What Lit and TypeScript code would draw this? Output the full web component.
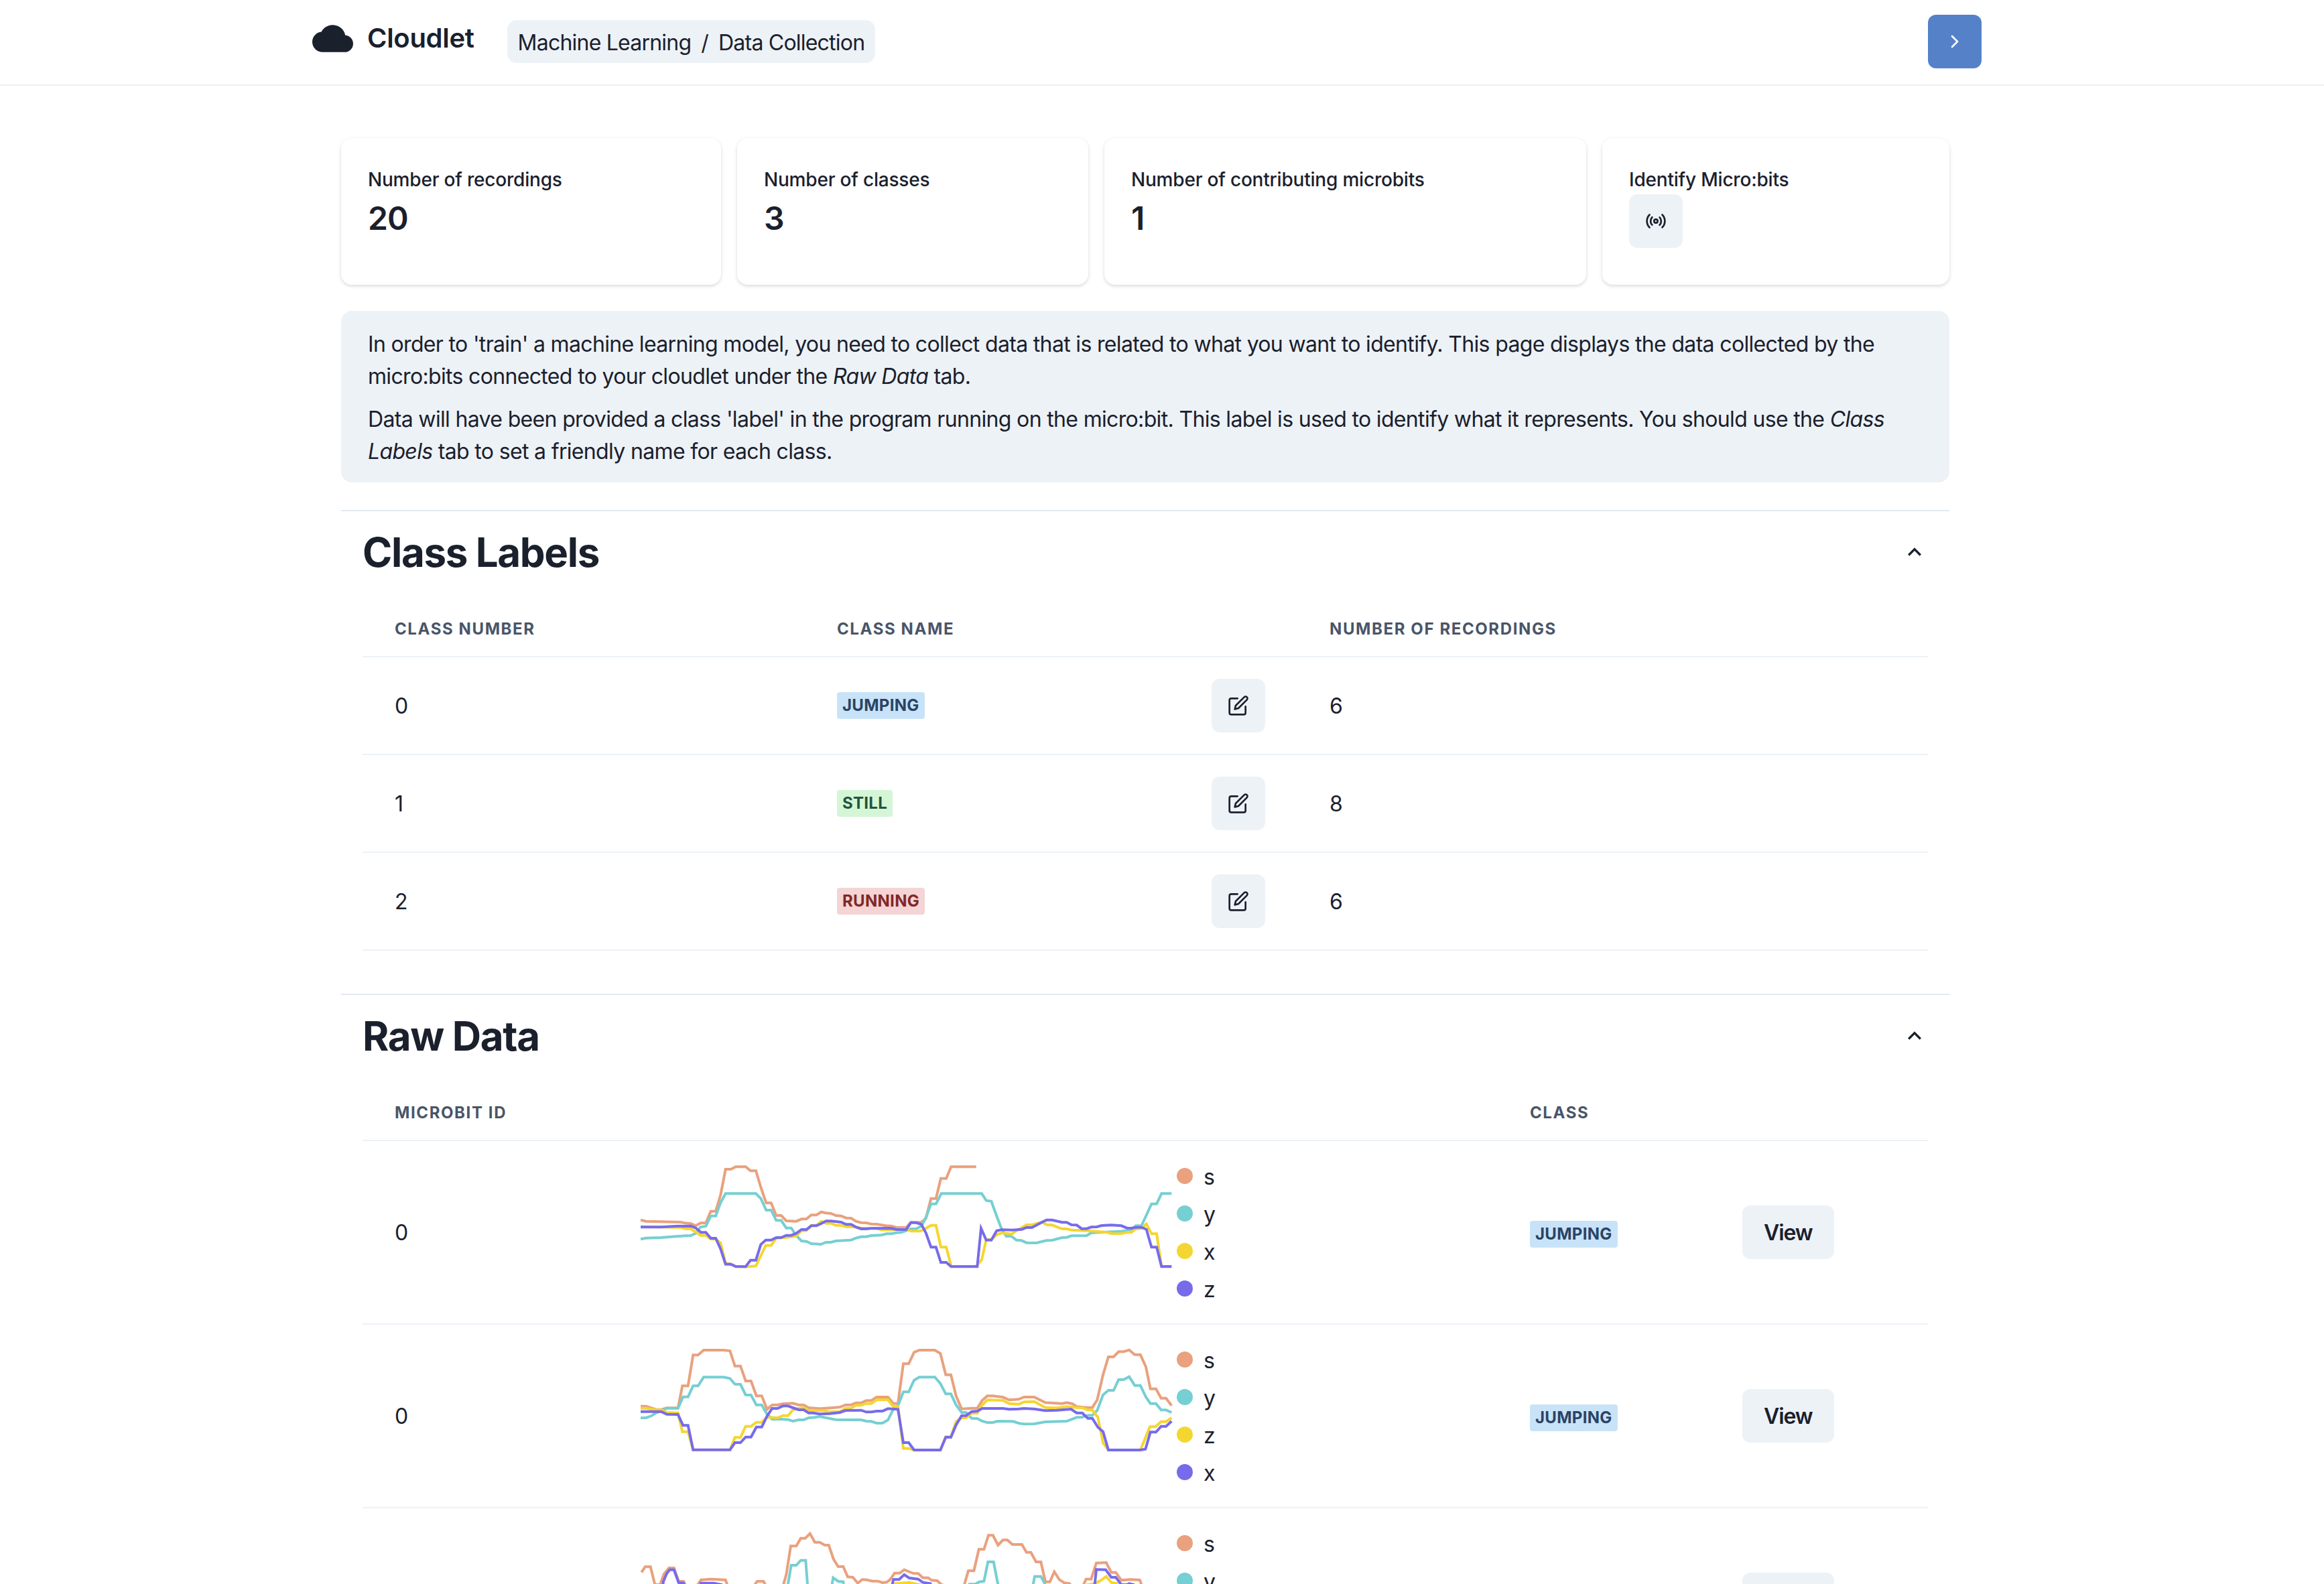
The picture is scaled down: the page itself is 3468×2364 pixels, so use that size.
import { LitElement, html, svg, css } from 'lit';
import { customElement } from 'lit/decorators.js';

type BadgeKind = 'jumping' | 'still' | 'running';

interface Recording {
  legend: string[];
  offset: number;
  lines: string[];
}

const LINE_COLORS = ['#e9a17e', '#76cfd2', '#f4d630', '#776beb'];

const CLASSES: { id: number; kind: BadgeKind; count: number }[] = [
  { id: 0, kind: 'jumping', count: 6 },
  { id: 1, kind: 'still', count: 8 },
  { id: 2, kind: 'running', count: 6 },
];

// traced from the recordings, 3 units per pixel
const RECORDINGS: Recording[] = [
  {
    legend: ['s', 'y', 'x', 'z'],
    offset: 0,
    lines: [
      '48,362 72,368 140,370 228,372 245,376 272,378 295,388 316,376 340,375 362,323 384,323 406,250 428,135 452,135 474,124 518,124 540,142 564,142 586,215 610,286 632,286 655,342 677,342 700,366 745,368 768,358 790,358 812,340 835,340 857,326 875,331 900,333 922,342 945,344 968,353 990,354 1012,368 1035,374 1058,375 1080,380 1105,381 1146,388 1170,389 1192,395 1237,396 1258,372 1280,373 1305,372 1325,355 1348,266 1370,266 1392,176 1416,176 1438,124 1550,124',
      '48,448 72,443 140,441 205,436 250,433 272,432 295,422 316,394 340,390 362,344 384,344 406,285 428,244 564,244 586,266 610,318 632,318 655,364 677,364 700,398 722,398 745,432 768,456 790,458 812,468 855,471 878,462 900,462 922,456 990,452 1012,443 1035,437 1058,437 1080,432 1125,430 1150,424 1170,424 1192,419 1215,418 1258,402 1280,402 1305,390 1325,352 1348,290 1370,290 1394,244 1575,244 1595,275 1618,278 1642,345 1665,405 1685,435 1708,435 1730,452 1752,454 1775,464 1820,465 1865,454 1890,453 1935,441 1955,440 1977,433 2045,432 2065,420 2110,417 2200,413 2245,406 2265,388 2290,388 2310,345 2335,290 2358,290 2380,244 2425,244',
      '48,392 140,394 228,396 250,402 272,402 295,416 316,431 340,431 362,448 384,448 406,465 428,556 452,560 474,570 518,572 564,568 586,522 608,476 632,476 655,444 700,440 745,434 768,410 790,410 812,386 835,386 857,368 878,377 900,377 922,386 945,386 968,392 1012,394 1035,398 1105,400 1125,406 1170,407 1192,404 1237,402 1258,412 1300,412 1325,400 1348,386 1370,386 1392,484 1416,484 1438,568 1440,570 1550,570 1575,540 1595,450 1618,450 1642,428 1665,420 1710,425 1730,410 1775,384 1800,384 1845,372 1865,383 1890,385 1935,402 1955,402 1977,407 2045,410 2090,413 2135,418 2158,424 2200,423 2225,418 2245,418 2265,402 2290,400 2312,380 2335,424 2358,424 2380,570 2425,570',
      '48,394 140,394 205,390 272,389 295,398 318,418 340,418 362,444 384,444 406,492 428,560 452,560 474,571 518,571 540,542 564,542 586,472 608,452 632,452 655,441 677,441 700,431 722,431 745,422 768,405 790,405 812,388 835,388 857,378 878,367 900,367 945,372 968,382 990,382 1012,394 1035,402 1058,402 1080,400 1170,399 1192,405 1237,405 1258,374 1280,374 1305,382 1325,420 1348,484 1370,484 1392,552 1416,552 1438,571 1555,571 1572,400 1595,452 1618,452 1642,410 1665,406 1710,407 1755,404 1775,396 1800,396 1845,372 1865,362 1890,362 1935,373 1955,373 1977,384 2000,385 2022,401 2045,401 2065,394 2090,393 2112,387 2155,385 2200,388 2225,398 2245,399 2265,395 2290,395 2312,404 2335,484 2358,484 2380,571 2425,571',
    ],
  },
  {
    legend: ['s', 'y', 'z', 'x'],
    offset: 18,
    lines: [
      '48,356 72,356 118,371 140,371 165,364 215,364 235,265 260,265 283,127 305,127 330,105 420,105 448,108 470,176 495,176 518,243 542,243 566,310 590,310 614,370 637,350 660,350 685,345 730,343 755,350 778,350 800,363 850,367 895,364 940,360 965,350 990,350 1012,341 1035,341 1058,331 1080,331 1105,315 1155,315 1180,344 1200,344 1224,166 1248,166 1272,115 1295,105 1365,105 1390,120 1414,215 1437,215 1460,310 1485,368 1530,365 1555,365 1577,330 1600,310 1625,310 1670,316 1698,328 1740,325 1765,315 1810,315 1860,340 1935,344 1955,340 1980,345 2000,358 2045,362 2070,362 2092,328 2118,215 2142,135 2165,135 2188,112 2210,112 2235,104 2260,125 2285,125 2310,180 2330,278 2355,278 2378,320 2400,320 2425,353',
      '48,408 72,408 95,400 118,385 140,378 165,365 215,365 238,314 260,314 283,265 305,265 330,226 420,226 448,232 470,257 495,258 518,305 542,306 566,350 590,350 614,392 637,414 680,414 708,416 730,423 755,417 778,417 800,408 830,406 850,402 895,411 920,416 1035,417 1058,423 1080,424 1105,432 1130,432 1155,418 1180,368 1200,355 1224,292 1248,292 1272,240 1295,226 1365,226 1390,255 1414,301 1437,301 1460,350 1485,384 1505,384 1530,410 1555,411 1577,423 1600,429 1625,429 1645,423 1715,424 1740,432 1765,436 1810,435 1860,426 1955,423 2000,406 2025,405 2050,397 2070,397 2092,375 2118,305 2142,285 2165,285 2188,237 2210,237 2235,224 2260,263 2285,263 2310,315 2330,344 2355,344 2378,373 2400,373 2425,384',
      '48,365 72,365 118,373 140,373 165,384 215,386 235,470 260,470 283,552 448,552 470,496 495,496 518,446 542,446 566,428 590,428 614,405 660,408 685,398 708,398 730,372 755,366 778,362 800,375 870,376 895,382 940,380 965,365 990,365 1012,352 1035,352 1058,344 1080,344 1105,327 1155,327 1180,358 1200,358 1224,545 1248,545 1272,553 1390,553 1414,493 1437,493 1460,425 1485,408 1505,408 1530,387 1555,387 1577,350 1600,328 1670,330 1698,344 1740,347 1765,337 1810,335 1860,362 1910,364 1955,358 2000,362 2025,363 2050,373 2070,373 2095,405 2118,520 2142,553 2285,553 2328,448 2353,448 2378,425 2400,425 2425,408',
      '48,380 140,380 165,392 215,393 238,442 260,442 283,551 448,551 470,519 495,519 518,494 542,494 566,449 590,449 614,400 637,366 660,366 685,355 708,355 730,363 755,372 778,372 800,386 820,386 850,391 895,389 940,384 965,375 1035,374 1058,382 1080,382 1105,378 1130,378 1155,367 1200,370 1224,519 1248,519 1272,552 1390,552 1414,495 1437,495 1460,440 1485,398 1505,398 1530,380 1555,378 1577,366 1670,366 1698,370 1740,368 1765,366 1810,368 1860,376 1910,374 1975,369 2000,386 2025,386 2050,410 2070,410 2095,450 2118,470 2142,552 2285,552 2308,548 2330,472 2355,472 2378,446 2400,446 2425,423',
    ],
  },
  {
    legend: ['s', 'y', 'z', 'x'],
    offset: 6,
    lines: [
      '52,290 68,265 92,265 112,345 135,345 152,298 175,270 197,270 218,330 240,330 262,370 300,350 318,324 360,320 395,322 428,324 445,370 540,370 570,330 598,330 620,370 680,370 700,300 720,172 745,172 765,137 785,137 806,116 828,155 850,155 872,168 890,168 912,232 932,264 955,264 975,310 998,312 1020,338 1040,322 1060,323 1085,329 1110,329 1130,336 1150,334 1165,322 1185,293 1208,293 1228,278 1270,295 1290,295 1312,314 1335,314 1350,325 1375,327 1395,345 1490,370 1515,283 1540,283 1562,187 1585,187 1605,124 1625,124 1648,168 1670,145 1690,145 1712,165 1755,165 1775,200 1795,200 1818,243 1840,243 1860,332 1880,332 1900,287 1922,322 1945,337 1968,340 1990,370 2020,370 2042,320 2065,320 2088,248 2132,246 2155,290 2175,290 2200,325 2240,322 2282,324 2300,370 2425,370',
      '690,400 708,340 722,258 745,258 765,236 787,236 795,345 800,400 895,400 910,314 932,330 955,332 962,400 1500,400 1520,343 1545,343 1565,332 1585,330 1603,243 1628,243 1648,345 1655,400 1795,400 1812,308 1840,308 1860,345 1870,400 2425,400',
      '1170,400 1185,340 1250,335 1300,345 1320,400 2040,400 2050,345 2070,342 2085,338 2110,325 2132,308 2155,335 2180,340 2195,400 2425,400',
      '140,400 150,330 165,295 178,278 197,278 218,336 240,338 255,400 300,400 318,338 375,338 410,345 430,400 1160,400 1180,322 1205,322 1228,300 1250,315 1290,320 1312,335 1345,340 1360,400 2075,400 2088,277 2130,278 2155,312 2175,312 2200,345 2225,345 2235,340 2255,345 2270,400 2425,400',
    ],
  },
];

const chartPoints = (line: string, offset: number) =>
  line
    .split(' ')
    .map((p) => {
      const [x, y] = p.split(',').map(Number);
      return `${(x / 3 - 16).toFixed(1)},${((y + offset) / 3 - 35).toFixed(1)}`;
    })
    .join(' ');

const editIcon = html`<svg class="icon" viewBox="0 0 24 24">
  <path d="M11 4H4a2 2 0 0 0-2 2v14a2 2 0 0 0 2 2h14a2 2 0 0 0 2-2v-7"></path>
  <path d="M18.5 2.5a2.121 2.121 0 0 1 3 3L12 15l-4 1 1-4 9.5-9.5z"></path>
</svg>`;

const radioIcon = html`<svg class="icon" viewBox="0 0 24 24">
  <path d="M4.9 19.1C1 15.2 1 8.8 4.9 4.9"></path>
  <path d="M7.8 16.2c-2.3-2.3-2.3-6.1 0-8.5"></path>
  <circle cx="12" cy="12" r="2"></circle>
  <path d="M16.2 7.8c2.3 2.3 2.3 6.1 0 8.5"></path>
  <path d="M19.1 4.9C23 8.8 23 15.1 19.1 19"></path>
</svg>`;

const collapseIcon = html`<svg class="collapse" viewBox="0 0 24 24">
  <path d="M16.59 8.59L12 13.17 7.41 8.59 6 10l6 6 6-6z"></path>
</svg>`;

@customElement('app-root')
export class AppRoot extends LitElement {
  static styles = css`
    :host {
      display: block;
      height: 2364px;
      overflow: hidden;
      background: #fff;
      color: #1a202c;
      font-family: Inter, 'Noto Sans', sans-serif;
      font-size: 32px;
      line-height: 48px;
      letter-spacing: -0.66px;
    }

    .icon {
      width: 32px;
      height: 32px;
      fill: none;
      stroke: currentColor;
      stroke-width: 2;
      stroke-linecap: round;
      stroke-linejoin: round;
    }

    /* Top bar */
    .topbar {
      display: flex;
      align-items: center;
      box-sizing: border-box;
      width: 2957px;
      height: 126px;
      padding: 0 0 2px 466px;
    }

    .topbar-line {
      border-bottom: 2px solid #edf2f7;
    }

    .logo {
      display: flex;
      align-items: center;
      gap: 21px;
      margin: 0 49px 10px 0;
      font-size: 40px;
      line-height: 60px;
      font-weight: 600;
      letter-spacing: -0.3px;
    }

    .logo svg {
      width: 61px;
      height: 41px;
      fill: #1a202c;
    }

    .crumbs {
      display: flex;
      align-items: center;
      box-sizing: border-box;
      height: 64px;
      padding: 4px 16px 0;
      border-radius: 14px;
      background: #edf2f7;
      letter-spacing: -0.78px;
    }

    .crumbs span {
      margin: 0 15px;
    }

    .next {
      display: flex;
      align-items: center;
      justify-content: center;
      width: 80px;
      height: 80px;
      margin-left: auto;
      padding: 0;
      border: none;
      border-radius: 12px;
      background: #5581c9;
      color: #fff;
    }

    /* Page body */
    .main {
      box-sizing: border-box;
      width: 2400px;
      margin-left: 509px;
      padding-top: 78px;
    }

    .stats {
      display: grid;
      grid-template-columns: 567fr 524fr 719fr 518fr;
      gap: 24px;
      height: 219px;
    }

    .stat {
      box-sizing: border-box;
      padding: 42px 40px;
      border-radius: 16px;
      background: #fff;
      box-shadow: 0 2px 6px rgba(0, 0, 0, 0.1), 0 2px 4px rgba(0, 0, 0, 0.06);
    }

    .stat-label {
      font-size: 28px;
      line-height: 40px;
      font-weight: 500;
      letter-spacing: -0.2px;
    }

    .stat-value {
      padding-top: 2px;
      font-size: 48px;
      line-height: 72px;
      font-weight: 600;
      letter-spacing: -1px;
    }

    .square {
      display: flex;
      align-items: center;
      justify-content: center;
      width: 80px;
      height: 80px;
      padding: 0;
      border: none;
      border-radius: 12px;
      background: #edf2f7;
      color: #1a202c;
    }

    .stat .square {
      margin-top: 2px;
    }

    .info {
      margin: 39px 0 41px;
      padding: 26px 40px 22px;
      border-radius: 16px;
      background: #edf2f7;
    }

    .info p {
      margin: 0;
    }

    .info p + p {
      margin-top: 16px;
    }

    /* Accordion sections */
    .section {
      padding-bottom: 64px;
      border-top: 2px solid #e2e8f0;
    }

    .section-head {
      display: flex;
      align-items: center;
      justify-content: space-between;
      height: 136px;
      padding: 0 32px 14px;
      box-sizing: border-box;
    }

    .section-head h2 {
      margin: 0;
      font-size: 60px;
      line-height: 90px;
      font-weight: 700;
      letter-spacing: -1.35px;
    }

    .collapse {
      width: 40px;
      height: 40px;
      fill: #1a202c;
      transform: rotate(180deg);
    }

    table {
      width: 2336px;
      margin-left: 32px;
      border-collapse: separate;
      border-spacing: 0;
      table-layout: fixed;
    }

    th {
      padding: 24px 48px;
      border-bottom: 2px solid #edf2f7;
      color: #4a5568;
      font-size: 24px;
      line-height: 32px;
      font-weight: 700;
      letter-spacing: 1.6px;
      text-align: left;
      text-transform: uppercase;
      white-space: nowrap;
    }

    td {
      padding: 32px 48px;
      border-bottom: 2px solid #edf2f7;
      line-height: 40px;
      vertical-align: middle;
    }

    .cell-text {
      display: inline-block;
      transform: translateY(1px);
    }

    .name-cell {
      display: flex;
      align-items: center;
      justify-content: space-between;
    }

    .badge {
      display: block;
      width: fit-content;
      padding: 0 8px;
      border-radius: 4px;
      font-size: 24px;
      line-height: 40px;
      font-weight: 700;
      letter-spacing: 0.3px;
      text-transform: uppercase;
    }

    .jumping {
      background: #c8e3f8;
      color: #2a4365;
    }

    .still {
      background: #d4f6d6;
      color: #22543d;
    }

    .running {
      background: #f4d4d4;
      color: #822727;
    }

    .raw .badge {
      margin-top: 6px;
    }

    /* Recording rows */
    .recording {
      display: flex;
      height: 208px;
    }

    .recording svg {
      flex: none;
      width: 800px;
      height: 208px;
      overflow: visible;
    }

    .recording polyline {
      fill: none;
      stroke-width: 4;
    }

    .legend {
      display: flex;
      flex-direction: column;
      gap: 16px;
    }

    .legend div {
      display: flex;
      align-items: center;
      gap: 16px;
      line-height: 40px;
    }

    .legend-name {
      transform: translateY(2px);
    }

    .dot {
      width: 24px;
      height: 24px;
      border-radius: 50%;
    }

    .view {
      height: 80px;
      padding: 2px 32px 0;
      border: none;
      border-radius: 12px;
      background: #edf2f7;
      color: #1a202c;
      font: 600 32px/40px Inter, sans-serif;
      letter-spacing: -1.1px;
    }
  `;

  private renderRecording(rec: Recording) {
    return html`<tr>
      <td><span class="cell-text">0</span></td>
      <td>
        <div class="recording">
          <svg viewBox="0 0 800 208">
            ${rec.lines.map(
              (line, i) =>
                svg`<polyline points=${chartPoints(line, rec.offset)} stroke=${LINE_COLORS[i]}></polyline>`
            )}
          </svg>
          <div class="legend">
            ${rec.legend.map(
              (name, i) =>
                html`<div>
                  <span class="dot" style="background:${LINE_COLORS[i]}"></span>
                  <span class="legend-name">${name}</span>
                </div>`
            )}
          </div>
        </div>
      </td>
      <td><span class="badge jumping">jumping</span></td>
      <td><button class="view">View</button></td>
    </tr>`;
  }

  render() {
    return html`
      <div class="topbar-line">
        <header class="topbar">
          <div class="logo">
            <svg viewBox="0 4 24 16">
              <path
                d="M19.35 10.04C18.67 6.59 15.64 4 12 4 9.11 4 6.6 5.64 5.35 8.04 2.34 8.36 0 10.91 0 14c0 3.31 2.69 6 6 6h13c2.76 0 5-2.24 5-5 0-2.64-2.05-4.78-4.65-4.96z"
              ></path>
            </svg>
            Cloudlet
          </div>
          <nav class="crumbs">Machine Learning<span>/</span>Data Collection</nav>
          <button class="next">
            <svg class="icon" viewBox="0 0 24 24"><path d="m9 18 6-6-6-6"></path></svg>
          </button>
        </header>
      </div>

      <main class="main">
        <div class="stats">
          <div class="stat">
            <div class="stat-label">Number of recordings</div>
            <div class="stat-value">20</div>
          </div>
          <div class="stat">
            <div class="stat-label">Number of classes</div>
            <div class="stat-value">3</div>
          </div>
          <div class="stat">
            <div class="stat-label">Number of contributing microbits</div>
            <div class="stat-value">1</div>
          </div>
          <div class="stat">
            <div class="stat-label">Identify Micro:bits</div>
            <button class="square">${radioIcon}</button>
          </div>
        </div>

        <div class="info">
          <p>
            In order to 'train' a machine learning model, you need to collect data that is related
            to what you want to identify. This page displays the data collected by the micro:bits
            connected to your cloudlet under the <em>Raw Data</em> tab.
          </p>
          <p>
            Data will have been provided a class 'label' in the program running on the micro:bit.
            This label is used to identify what it represents. You should use the
            <em>Class Labels</em> tab to set a friendly name for each class.
          </p>
        </div>

        <section class="section">
          <div class="section-head"><h2>Class Labels</h2>${collapseIcon}</div>
          <table>
            <colgroup>
              <col style="width:660px" />
              <col style="width:735px" />
              <col />
            </colgroup>
            <thead>
              <tr>
                <th>Class Number</th>
                <th>Class Name</th>
                <th>Number of Recordings</th>
              </tr>
            </thead>
            <tbody>
              ${CLASSES.map(
                (c) => html`<tr>
                  <td><span class="cell-text">${c.id}</span></td>
                  <td>
                    <div class="name-cell">
                      <span class="badge ${c.kind}">${c.kind}</span>
                      <button class="square">${editIcon}</button>
                    </div>
                  </td>
                  <td><span class="cell-text">${c.count}</span></td>
                </tr>`
              )}
            </tbody>
          </table>
        </section>

        <section class="section raw">
          <div class="section-head"><h2>Raw Data</h2>${collapseIcon}</div>
          <table>
            <colgroup>
              <col style="width:367px" />
              <col style="width:1327px" />
              <col style="width:317px" />
              <col />
            </colgroup>
            <thead>
              <tr>
                <th>Microbit ID</th>
                <th></th>
                <th>Class</th>
                <th></th>
              </tr>
            </thead>
            <tbody>
              ${RECORDINGS.map((rec) => this.renderRecording(rec))}
            </tbody>
          </table>
        </section>
      </main>
    `;
  }
}

declare global {
  interface HTMLElementTagNameMap {
    'app-root': AppRoot;
  }
}
